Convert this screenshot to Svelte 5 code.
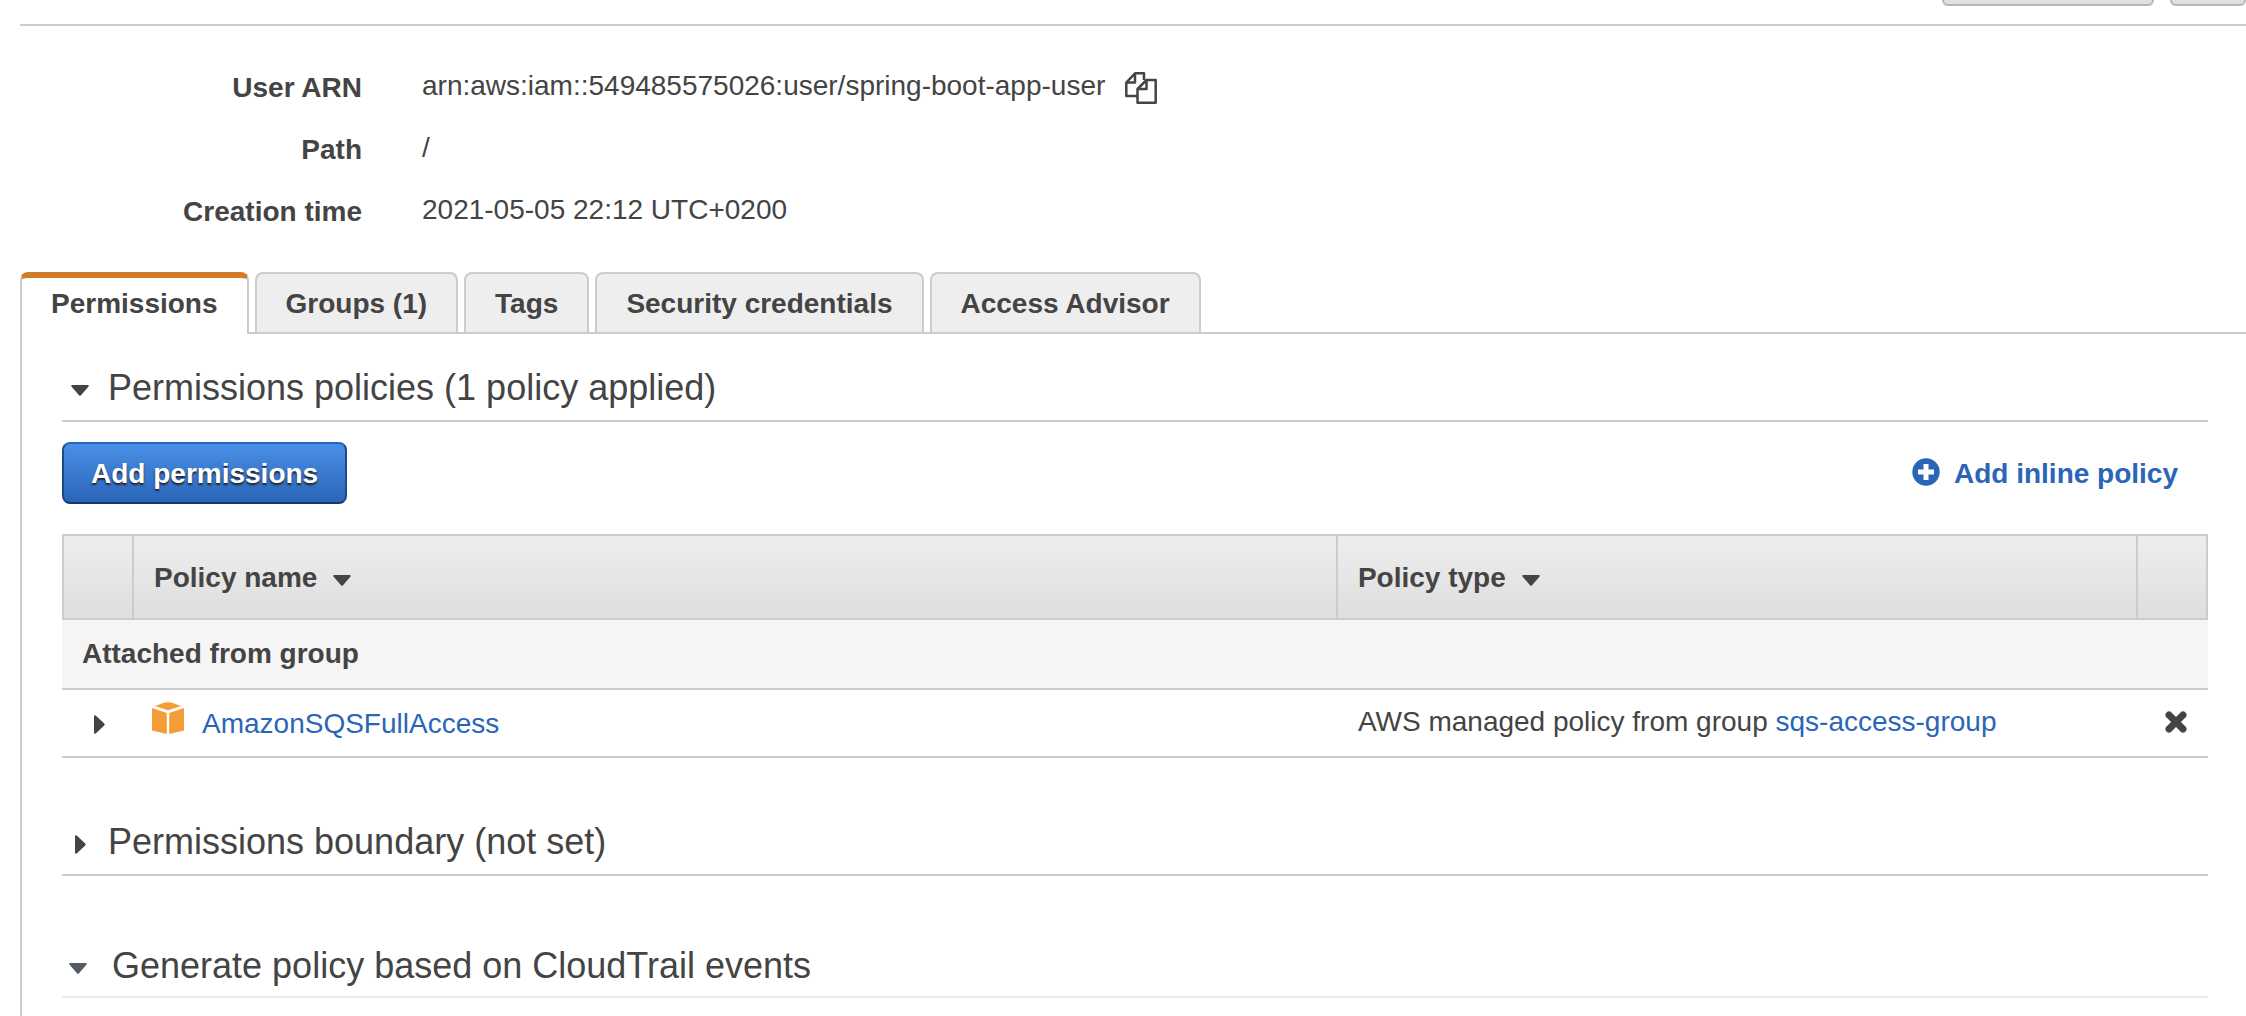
<script>
  const details = [
    { label: 'User ARN', value: 'arn:aws:iam::549485575026:user/spring-boot-app-user', copy: true },
    { label: 'Path', value: '/' },
    { label: 'Creation time', value: '2021-05-05 22:12 UTC+0200' }
  ];
  const tabs = ['Permissions', 'Groups (1)', 'Tags', 'Security credentials', 'Access Advisor'];
  let active = $state('Permissions');
</script>

{#snippet caretDown()}
  <svg class="caret" width="18" height="11" viewBox="0 0 18 11" aria-hidden="true"><path d="M1 0H17Q18.400 .6 17.400 1.700L10 10.200Q9 11.200 8 10.200L.6 1.700Q-.4 .6 1 0Z" /></svg>
{/snippet}

{#snippet caretRight()}
  <svg class="caret" width="11" height="19" viewBox="0 0 11 19" aria-hidden="true"><path d="M0 1Q.6 -.4 1.700 .6L10.200 8.500Q11.200 9.500 10.200 10.500L1.700 18.400Q.6 19.400 0 18Z" /></svg>
{/snippet}

<div class="page">
  <header class="toolbar">
    <button class="stub wide" type="button" aria-label="Delete user"></button>
    <button class="stub" type="button" aria-label="Help"></button>
  </header>

  <main>
    <dl>
      {#each details as row}
        <dt>{row.label}</dt>
        <dd>
          {row.value}
          {#if row.copy}
            <button class="icon-button copy" type="button" aria-label="Copy user ARN">
              <svg width="32" height="32" viewBox="0 0 32 32" fill="none" stroke="#444" stroke-width="2.500" stroke-linejoin="round" aria-hidden="true">
                <path d="M12.500 24H1.300V10.500L10 1.300H19V8M10 1.300V10.500H1.300" />
                <path d="M12.500 17L21.500 8H30.700V30.700H12.500Z" />
                <path d="M21.500 8V17H12.500" />
              </svg>
            </button>
          {/if}
        </dd>
      {/each}
    </dl>

    <div class="tabs" role="tablist">
      {#each tabs as tab}
        <button type="button" role="tab" class:active={tab === active} aria-selected={tab === active} onclick={() => (active = tab)}>{tab}</button>
      {/each}
    </div>

    <div class="panel" role="tabpanel">
      <h2>
        <button type="button" aria-expanded="true"><span class="slot">{@render caretDown()}</span>Permissions policies (1 policy applied)</button>
      </h2>

      <div class="actions">
        <button class="primary" type="button">Add permissions</button>
        <a class="inline-link" href="#inline">
          <svg width="28" height="28" viewBox="0 0 28 28" aria-hidden="true"><circle cx="14" cy="14" r="13.700" fill="#2a65b8" /><path d="M14 6V22M6 14H22" stroke="#fff" stroke-width="5" /></svg>
          Add inline policy
        </a>
      </div>

      <table>
        <colgroup>
          <col class="c-expand" /><col class="c-name" /><col /><col class="c-remove" />
        </colgroup>
        <thead>
          <tr>
            <th scope="col" aria-label="Expand"></th>
            <th scope="col"><button type="button">Policy name {@render caretDown()}</button></th>
            <th scope="col"><button type="button">Policy type {@render caretDown()}</button></th>
            <th scope="col" aria-label="Remove"></th>
          </tr>
        </thead>
        <tbody>
          <tr class="group"><th colspan="4" scope="colgroup">Attached from group</th></tr>
          <tr class="policy">
            <td class="expand"><button class="icon-button" type="button" aria-label="Expand policy">{@render caretRight()}</button></td>
            <td class="name-cell">
              <div class="name">
                <svg width="32" height="32" viewBox="0 0 32 32" fill="#f49d37" aria-hidden="true">
                  <path d="M3 4L12 .8Q16 -.4 20 .8L29 4L16 8.300Z" />
                  <path d="M0 6L14.800 11V32L0 28.500Z" />
                  <path d="M32 6L17.200 11V32L32 28.500Z" />
                </svg>
                <a href="#policy">AmazonSQSFullAccess</a>
              </div>
            </td>
            <td>AWS managed policy from group <a href="#group">sqs-access-group</a></td>
            <td class="remove">
              <button class="icon-button" type="button" aria-label="Detach policy">
                <svg width="22" height="22" viewBox="0 0 22 22" stroke="#444" stroke-width="7" stroke-linecap="round" aria-hidden="true"><path d="M4 4L18 18M18 4L4 18" /></svg>
              </button>
            </td>
          </tr>
        </tbody>
      </table>

      <h2 class="boundary">
        <button type="button" aria-expanded="false"><span class="slot">{@render caretRight()}</span>Permissions boundary (not set)</button>
      </h2>

      <h2 class="generate">
        <button type="button" aria-expanded="true"><span class="slot">{@render caretDown()}</span>Generate policy based on CloudTrail events</button>
      </h2>
    </div>
  </main>
</div>

<style>
  :global(body) {
    background: #fff;
    overflow-x: hidden;
  }
  .page {
    box-sizing: border-box;
    min-height: 100vh;
    padding-left: 20px;
    display: flex;
    flex-direction: column;
    font: 28px/32px 'Liberation Sans', Arial, sans-serif;
    color: #444;
  }
  button {
    font: inherit;
    color: inherit;
    background: none;
    border: 0;
    padding: 0;
    margin: 0;
    cursor: pointer;
  }
  a {
    color: #2a65b8;
    text-decoration: none;
  }
  svg {
    display: block;
    flex: none;
  }
  .caret {
    fill: currentColor;
  }
  .icon-button {
    display: block;
  }

  .toolbar {
    display: flex;
    justify-content: flex-end;
    gap: 16px;
    padding-bottom: 18px;
    border-bottom: 2px solid #ccc;
  }
  .stub {
    width: 76px;
    height: 6px;
    box-sizing: border-box;
    background: #dfdfdf;
    border: 2px solid #b7b7b7;
    border-top: 0;
    border-radius: 0 0 8px 8px;
  }
  .wide {
    width: 212px;
  }

  main {
    flex: 1;
    display: flex;
    flex-direction: column;
  }
  dl {
    display: grid;
    grid-template-columns: 342px 1fr;
    gap: 28px 60px;
    margin: 0;
    padding: 44px 0;
  }
  dt {
    padding-top: 2px;
    font-weight: bold;
    text-align: right;
  }
  dd {
    margin: 0;
    display: flex;
    align-items: flex-start;
    gap: 20px;
  }
  .copy {
    padding-top: 2px;
  }

  .tabs {
    display: flex;
    gap: 6px;
    border-bottom: 2px solid #ccc;
  }
  .tabs button {
    padding: 14px 29px 12px;
    font-weight: bold;
    background: #eee;
    border: 2px solid #ccc;
    border-bottom: 0;
    border-radius: 8px 8px 0 0;
  }
  .tabs .active {
    position: relative;
    margin-bottom: -2px;
    padding: 10px 29px 14px;
    background: #fff;
    border-top: 6px solid #d27b29;
  }

  .panel {
    flex: 1;
    padding: 32px 38px 0 40px;
    border-left: 2px solid #ccc;
  }
  h2 {
    margin: 0;
    padding-bottom: 10px;
    font-size: 36px;
    line-height: 44px;
    font-weight: normal;
    border-bottom: 2px solid #ccc;
  }
  h2 button {
    display: flex;
    align-items: center;
    text-align: left;
  }
  .slot {
    width: 36px;
    margin-right: 10px;
    padding-top: 4px;
    display: flex;
    justify-content: center;
  }
  .boundary {
    margin-top: 62px;
  }
  .generate {
    margin-top: 68px;
    padding-bottom: 8px;
    border-bottom-color: #eaeded;
  }
  .generate .slot {
    width: 32px;
    margin-right: 18px;
    color: #545b64;
  }

  .actions {
    display: flex;
    justify-content: space-between;
    align-items: center;
    padding: 20px 30px 30px 0;
  }
  .primary {
    padding: 14px 27px 12px;
    color: #fff;
    font-weight: bold;
    text-shadow: 0 2px 2px #222;
    background: linear-gradient(#4a8fe7, #2a65b8);
    border: 2px solid #1c4a8c;
    border-top-color: #2a65b8;
    border-bottom-color: #17386b;
    border-radius: 8px;
  }
  .inline-link {
    display: flex;
    align-items: flex-start;
    gap: 14px;
    padding-top: 2px;
    font-weight: bold;
  }

  table {
    width: 100%;
    table-layout: fixed;
    border-collapse: separate;
    border-spacing: 0;
    text-align: left;
  }
  .c-expand {
    width: 72px;
  }
  .c-name {
    width: 56.1%;
  }
  .c-remove {
    width: 70px;
  }
  th,
  td {
    padding: 0 20px;
    border-bottom: 2px solid #ccc;
  }
  thead tr {
    background: linear-gradient(#eee, #dedede);
  }
  thead th {
    padding: 26px 20px 24px;
    border-top: 2px solid #ccc;
    border-right: 2px solid #ccc;
  }
  thead th:first-child {
    border-left: 2px solid #ccc;
  }
  thead button {
    display: flex;
    align-items: center;
    gap: 16px;
    font-weight: bold;
  }
  thead .caret {
    margin-top: 4px;
  }
  .group th {
    padding: 18px 20px;
    background: #f5f5f5;
  }
  .policy td {
    padding: 16px 20px;
    vertical-align: top;
  }
  .policy .name-cell {
    padding: 12px 18px 16px;
  }
  .policy .expand {
    padding: 25px 20px 0 32px;
  }
  .policy .remove {
    padding: 21px 20px 0 27px;
  }
  .name {
    display: flex;
    align-items: flex-start;
    gap: 18px;
  }
  .name a {
    padding-top: 6px;
  }
</style>
